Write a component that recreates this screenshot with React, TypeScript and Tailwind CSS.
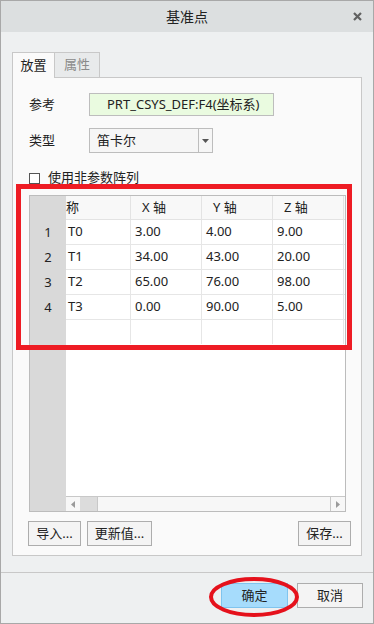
import React from "react";

const font = { fontFamily: '"Noto Sans", "Noto Sans CJK SC", sans-serif' };

const rows = [
  { n: "1", name: "T0", x: "3.00", y: "4.00", z: "9.00" },
  { n: "2", name: "T1", x: "34.00", y: "43.00", z: "20.00" },
  { n: "3", name: "T2", x: "65.00", y: "76.00", z: "98.00" },
  { n: "4", name: "T3", x: "0.00", y: "90.00", z: "5.00" },
];

function Btn({ children, className = "" }: { children: React.ReactNode; className?: string }) {
  return (
    <button
      className={
        "h-[25px] border border-[#adadad] bg-[#f4f4f4] text-[13px] text-[#222] flex items-center justify-center " +
        className
      }
    >
      {children}
    </button>
  );
}

export default function App() {
  return (
    <div
      style={font}
      className="relative w-[374px] h-[624px] border border-[#a8a8a8] bg-[#eef0f1] flex flex-col text-[13px] text-[#222] overflow-hidden"
    >
      {/* 标题栏 */}
      <div className="h-[31px] bg-[#dcdfe0] grid grid-cols-[40px_1fr_40px] items-center">
        <div />
        <div className="text-center text-[14px] text-[#222]">基准点</div>
        <div className="flex justify-end pr-[11px]">
          <svg width="9" height="9" viewBox="0 0 9 9">
            <path d="M1 1L8 8M8 1L1 8" stroke="#616161" strokeWidth="2.2" />
          </svg>
        </div>
      </div>

      {/* 标签页 */}
      <div className="flex ml-[11px] mt-[20px] h-[25px]">
        <div className="w-[43px] h-[26px] border border-[#c8c8c8] border-b-0 bg-[#fafafa] flex items-center justify-center relative z-10">
          放置
        </div>
        <div className="w-[45px] h-[25px] border border-[#c8c8c8] border-l-0 border-b-0 bg-[#e8eaeb] flex items-center justify-center text-[#8a8a8a]">
          属性
        </div>
      </div>

      {/* 面板 */}
      <div className="ml-[11px] w-[350px] h-[479px] border border-[#c8c8c8] bg-[#fafafa] flex flex-col pl-[16px] pr-[10px] pt-[15px]">
        <div className="flex items-center h-[23px]">
          <span className="w-[60px]">参考</span>
          <div className="w-[185px] h-[23px] border border-[#bdbdbd] bg-[#eafbe0] flex items-center pl-[17px]">
            PRT_CSYS_DEF:F4(坐标系)
          </div>
        </div>
        <div className="flex items-center h-[25px] mt-[12px]">
          <span className="w-[60px]">类型</span>
          <div className="w-[124px] h-[25px] border border-[#bdbdbd] bg-[#f6f6f6] flex">
            <div className="flex-1 flex items-center pl-[7px]">笛卡尔</div>
            <div className="w-[14px] border-l border-[#bdbdbd] flex items-center justify-center">
              <svg width="7" height="4" viewBox="0 0 7 4">
                <path d="M0 0H7L3.5 4Z" fill="#555" />
              </svg>
            </div>
          </div>
        </div>
        <div className="flex items-center h-[12px] mt-[19px] gap-[8px]">
          <div className="w-[11px] h-[11px] border border-[#555] bg-white" />
          <span>使用非参数阵列</span>
        </div>

        {/* 表格 */}
        <div className="mt-[11px] w-[317px] h-[317px] border border-[#bcbcbc] flex bg-white">
          <div className="w-[36px] bg-[#d9d9d9] flex flex-col">
            <div className="h-[24px]" />
            {rows.map((r) => (
              <div key={r.n} className="h-[25px] flex items-center justify-center">
                {r.n}
              </div>
            ))}
          </div>
          <div className="flex-1 flex flex-col">
            <div className="h-[24px] grid grid-cols-[65px_71px_71px_71px] bg-[#f8f8f8] border-b border-[#e3e3e3]">
              <div className="flex items-center border-r border-[#e3e3e3]">称</div>
              <div className="flex items-center pl-[11px] border-r border-[#e3e3e3]">X 轴</div>
              <div className="flex items-center pl-[11px] border-r border-[#e3e3e3]">Y 轴</div>
              <div className="flex items-center pl-[11px] border-r border-[#e3e3e3]">Z 轴</div>
            </div>
            {rows.map((r) => (
              <div
                key={r.n}
                className="h-[25px] grid grid-cols-[65px_71px_71px_71px] border-b border-[#e6e6e6]"
              >
                <div className="flex items-center pl-[2px] border-r border-[#e6e6e6]">{r.name}</div>
                <div className="flex items-center pl-[4px] border-r border-[#e6e6e6]">{r.x}</div>
                <div className="flex items-center pl-[4px] border-r border-[#e6e6e6]">{r.y}</div>
                <div className="flex items-center pl-[4px] border-r border-[#e6e6e6]">{r.z}</div>
              </div>
            ))}
            <div className="h-[24px] grid grid-cols-[65px_71px_71px_71px]">
              <div className="border-r border-[#e6e6e6]" />
              <div className="border-r border-[#e6e6e6]" />
              <div className="border-r border-[#e6e6e6]" />
              <div className="border-r border-[#e6e6e6]" />
            </div>
            <div className="flex-1" />
            <div className="h-[15px] flex border-t border-[#c8c8c8] bg-[#f7f7f7]">
              <div className="w-[14px] flex items-center justify-center">
                <svg width="4" height="7" viewBox="0 0 4 7">
                  <path d="M4 0V7L0 3.5Z" fill="#9a9a9a" />
                </svg>
              </div>
              <div className="w-[17px] bg-[#dcdcdc]" />
              <div className="flex-1 border-l border-r border-[#c8c8c8]" />
              <div className="w-[14px] flex items-center justify-center">
                <svg width="4" height="7" viewBox="0 0 4 7">
                  <path d="M0 0V7L4 3.5Z" fill="#9a9a9a" />
                </svg>
              </div>
            </div>
          </div>
        </div>

        <div className="flex mt-[9px] gap-[6px] -ml-[1px]">
          <Btn className="w-[53px]">导入...</Btn>
          <Btn className="w-[65px]">更新值...</Btn>
          <div className="flex-1" />
          <Btn className="w-[53px]">保存...</Btn>
        </div>
      </div>

      {/* 底部 */}
      <div className="mt-[16px] h-px bg-[#c8c8c8]" />
      <div className="flex justify-end gap-[9px] pr-[10px] mt-[10px]">
        <button className="w-[67px] h-[25px] border border-[#7fc4ee] bg-[#a6dcfc] text-[13px]">确定</button>
        <button className="w-[66px] h-[25px] border border-[#adadad] bg-[#f4f4f4] text-[13px]">取消</button>
      </div>

      {/* 红色标注 */}
      <div className="absolute left-[15px] top-[183px] w-[336px] h-[166px] border-[5px] border-[#ee1c24] pointer-events-none" />
      <svg className="absolute left-[206px] top-[574px] pointer-events-none" width="96" height="44" viewBox="0 0 96 44">
        <ellipse cx="47" cy="22" rx="43" ry="18" fill="none" stroke="#e5111c" strokeWidth="4" />
      </svg>
    </div>
  );
}
